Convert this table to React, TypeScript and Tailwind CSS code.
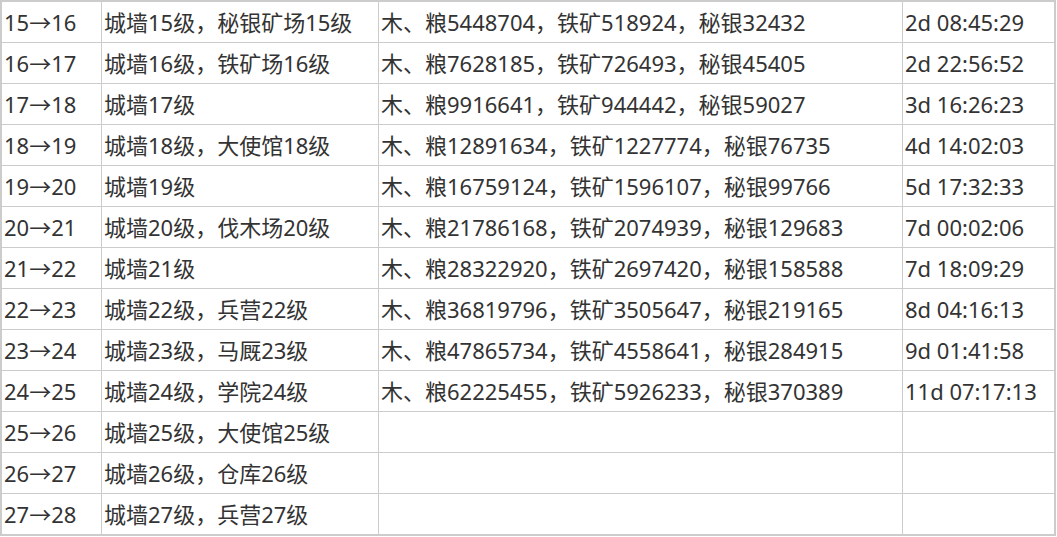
import React from 'react';

type Row = [string, string, string, string];

const rows: Row[] = [
  ['15→16', '城墙15级，秘银矿场15级', '木、粮5448704，铁矿518924，秘银32432', '2d 08:45:29'],
  ['16→17', '城墙16级，铁矿场16级', '木、粮7628185，铁矿726493，秘银45405', '2d 22:56:52'],
  ['17→18', '城墙17级', '木、粮9916641，铁矿944442，秘银59027', '3d 16:26:23'],
  ['18→19', '城墙18级，大使馆18级', '木、粮12891634，铁矿1227774，秘银76735', '4d 14:02:03'],
  ['19→20', '城墙19级', '木、粮16759124，铁矿1596107，秘银99766', '5d 17:32:33'],
  ['20→21', '城墙20级，伐木场20级', '木、粮21786168，铁矿2074939，秘银129683', '7d 00:02:06'],
  ['21→22', '城墙21级', '木、粮28322920，铁矿2697420，秘银158588', '7d 18:09:29'],
  ['22→23', '城墙22级，兵营22级', '木、粮36819796，铁矿3505647，秘银219165', '8d 04:16:13'],
  ['23→24', '城墙23级，马厩23级', '木、粮47865734，铁矿4558641，秘银284915', '9d 01:41:58'],
  ['24→25', '城墙24级，学院24级', '木、粮62225455，铁矿5926233，秘银370389', '11d 07:17:13'],
  ['25→26', '城墙25级，大使馆25级', '', ''],
  ['26→27', '城墙26级，仓库26级', '', ''],
  ['27→28', '城墙27级，兵营27级', '', ''],
];

// widths include the 1px right border
const widths = ['w-[100px]', 'w-[277px]', 'w-[524px]', 'w-[151px]'];

const App: React.FC = () => {
  return (
    <div className="bg-white w-[1057px] h-[537px] text-[22px] text-[#333333] font-['Noto_Sans','Noto_Sans_CJK_SC',sans-serif]">
      <div className="w-[1056px] border-2 border-[#cccccc] flex flex-col">
        {rows.map((row, i) => (
          <div
            key={i}
            className={`flex ${i < rows.length - 1 ? 'h-[41px] border-b border-[#cccccc]' : 'h-[40px]'}`}
          >
            {row.map((cell, j) => (
              <div
                key={j}
                className={`${widths[j]} shrink-0 flex items-center pl-[2px] whitespace-nowrap overflow-hidden ${j < 3 ? 'border-r border-[#cccccc]' : ''}`}
              >
                {cell}
              </div>
            ))}
          </div>
        ))}
      </div>
    </div>
  );
};

export default App;
